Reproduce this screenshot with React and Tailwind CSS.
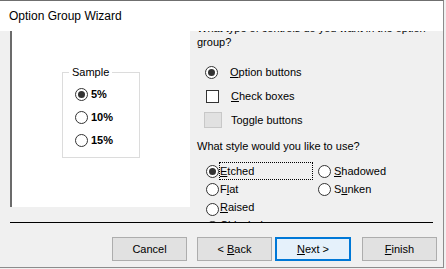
import React from "react";

const font = { fontFamily: '"Liberation Sans", Arial, sans-serif' };

const Radio = ({ checked }) => (
  <span className="flex h-[13px] w-[13px] shrink-0 items-center justify-center rounded-full border border-[#333333] bg-white">
    {checked && <span className="h-[7px] w-[7px] rounded-full bg-[#333333]" />}
  </span>
);

const Btn = ({ children, w = "w-[75px]", primary }) => (
  <div
    className={`flex h-[24px] ${w} items-center justify-center text-[11px] text-black ${
      primary ? "border-2 border-[#0078d7] bg-[#e5f1fb]" : "border border-[#adadad] bg-[#e1e1e1]"
    }`}
  >
    <span>{children}</span>
  </div>
);

export default function App() {
  return (
    <div
      className="relative h-[269px] w-[446px] overflow-hidden bg-[#f0f0f0] text-[11px] text-black"
      style={font}
    >
      <div className="flex h-[268px] w-[444px] flex-col border-r border-b border-[#8c8c8c] border-t border-t-[#6f6f6f]">
        {/* title bar */}
        <div className="relative z-10 flex h-[30px] shrink-0 items-center bg-white pl-[9px] text-[12px]">
          Option Group Wizard
        </div>

        {/* body */}
        <div className="flex h-[191px] shrink-0 overflow-hidden">
          <div className="flex w-[190px] shrink-0 items-start pl-[10px]">
            <div className="h-[176px] w-[180px] shrink-0 border-l-2 border-[#6b6b6b] bg-white pl-[50px] pt-[41px]">
              <div className="relative h-[86px] w-[78px] border border-[#dcdcdc] pl-[12px] pt-[15px]">
                <span className="absolute left-[6px] top-[-8px] bg-white px-[3px] leading-[14px]">Sample</span>
                <div className="flex flex-col gap-[10px] font-bold">
                  <div className="flex items-center gap-[3px] leading-[13px]"><Radio checked />5%</div>
                  <div className="flex items-center gap-[3px] leading-[13px]"><Radio />10%</div>
                  <div className="flex items-center gap-[3px] leading-[13px]"><Radio />15%</div>
                </div>
              </div>
            </div>
          </div>

          <div className="flex flex-1 flex-col overflow-hidden pl-[7px]">
            <div className="mt-[-10px] w-[250px] shrink-0 leading-[14px]">
              What type of controls do you want in the option group?
            </div>
            <div className="mt-[11px] flex h-[24px] shrink-0 items-center pl-[8px]">
              <Radio checked />
              <span className="ml-[12px]"><u>O</u>ption buttons</span>
            </div>
            <div className="flex h-[24px] shrink-0 items-center pl-[9px]">
              <span className="h-[13px] w-[13px] border border-[#333333] bg-white" />
              <span className="ml-[12px]"><u>C</u>heck boxes</span>
            </div>
            <div className="flex h-[24px] shrink-0 items-center pl-[7px]">
              <span className="h-[16px] w-[18px] border border-[#c8c8c8] bg-[#e1e1e1]" />
              <span className="ml-[9px]">Toggle buttons</span>
            </div>
            <div className="flex h-[28px] shrink-0 items-center">What style would you like to use?</div>
            <div className="mt-[2px] grid shrink-0 grid-cols-[112px_1fr] pl-[9px]">
              <div className="flex h-[18px] items-center">
                <Radio checked />
                <span className="flex h-[18px] w-[94px] items-center border border-dotted border-black">
                  <span><u>E</u>tched</span>
                </span>
              </div>
              <div className="flex h-[18px] items-center gap-[3px]">
                <Radio /><span><u>S</u>hadowed</span>
              </div>
              <div className="flex h-[18px] items-center gap-[1px]">
                <Radio /><span>F<u>l</u>at</span>
              </div>
              <div className="flex h-[18px] items-center gap-[3px]">
                <Radio /><span>S<u>u</u>nken</span>
              </div>
              <div className="mt-[2px] flex h-[18px] items-center gap-[1px]">
                <Radio /><span className="mt-[-3px]"><u>R</u>aised</span>
              </div>
              <div />
              <div className="flex h-[18px] items-center gap-[1px]">
                <Radio /><span className="mt-[-3px]">Chiseled</span>
              </div>
            </div>
          </div>
        </div>

        {/* separator */}
        <div className="ml-[10px] h-px w-[423px] shrink-0 bg-black" />

        {/* buttons */}
        <div className="mt-[14px] flex items-center pl-[112px]">
          <Btn>Cancel</Btn>
          <div className="ml-[10px]"><Btn>&lt; <u>B</u>ack</Btn></div>
          <div className="ml-[3px]"><Btn w="w-[76px]" primary><u>N</u>ext &gt;</Btn></div>
          <div className="ml-[11px]"><Btn><u>F</u>inish</Btn></div>
        </div>
      </div>
    </div>
  );
}
